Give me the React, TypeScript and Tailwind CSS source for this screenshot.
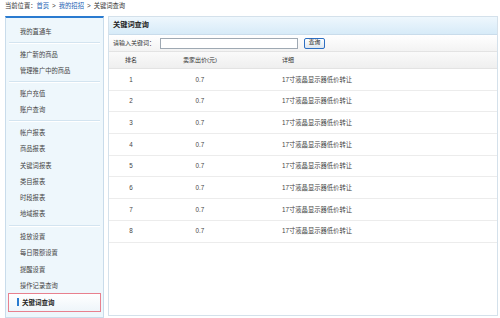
import React from "react";

type Row = {
  rank: number;
  price: string;
  detail: string;
};

const groups: string[][] = [
  ["我的直通车"],
  ["推广新的商品", "管理推广中的商品"],
  ["账户充值", "账户查询"],
  ["帐户报表", "商品报表", "关键词报表", "类目报表", "时段报表", "地域报表"],
  ["投放设置", "每日限额设置", "提醒设置", "操作记录查询"],
];

const rows: Row[] = Array.from({ length: 8 }, (_, i) => ({
  rank: i + 1,
  price: "0.7",
  detail: "17寸液晶显示器低价转让",
}));

const Sidebar: React.FC = () => {
  return (
    <div className="w-[99px] h-[302px] shrink-0 bg-[#eef7fc] border-t-2 border-t-[#2a7bd0] border-x border-b border-x-[#c9dceb] border-b-[#c9dceb] flex flex-col">
      {groups.map((items, gi) => (
        <div key={gi}>
          <div className={gi === 0 ? "pt-[6px] pb-[2px]" : "pt-[2px] pb-[2.5px]"}>
            {items.map((label) => (
              <div key={label} className="h-[16.3px] pl-[14px] flex items-center text-[6.3px] text-[#444]">
                {label}
              </div>
            ))}
            {gi === groups.length - 1 && (
              <div className="mx-[2px] -mt-[1px] h-[19px] border border-[#e8808e] bg-gradient-to-b from-white to-[#eef5fa] flex items-center">
                <span className="ml-[8px] w-[2px] h-[8px] bg-[#2a7bd0]" />
                <span className="ml-[3px] text-[6.5px] font-bold text-[#222]">关键词查询</span>
              </div>
            )}
          </div>
          {gi < groups.length - 1 && (
            <div className="mx-[3px] border-t border-[#d3e4f0] border-b border-b-white" />
          )}
        </div>
      ))}
    </div>
  );
};

const Panel: React.FC = () => {
  return (
    <div className="w-[390px] h-[300px] border border-[#d4e1eb] flex flex-col bg-white">
      <div className="h-[18px] px-[4px] flex items-center bg-gradient-to-b from-[#eef7fd] to-[#d7ebf8] border-b border-[#c9dceb]">
        <span className="text-[7.2px] font-bold text-[#222]">关键词查询</span>
      </div>
      <div className="h-[17px] px-[4px] flex items-center bg-gradient-to-b from-white to-[#f3f3f3] border-b border-[#e3e3e3]">
        <span className="text-[6px] text-[#333] w-[47px]">请输入关键词：</span>
        <div className="w-[138px] h-[11px] border border-[#9fa9b3] bg-white" />
        <button className="ml-[6px] w-[21px] h-[11px] border border-[#2d6fc2] rounded-[2px] bg-gradient-to-b from-white to-[#dde6ef] text-[5.8px] leading-none text-[#222] flex items-center justify-center">
          查询
        </button>
      </div>
      <div className="h-[17px] flex items-center bg-gradient-to-b from-[#fafafa] to-[#efefef] border-b border-[#e3e3e3] text-[6px] text-[#333]">
        <div className="w-[44px] text-center">排名</div>
        <div className="w-[94px] text-center">卖家出价(元)</div>
        <div className="pl-[35px]">详细</div>
      </div>
      {rows.map((r) => (
        <div key={r.rank} className="h-[21.7px] flex items-center border-b border-[#ececec] text-[6.3px] text-[#444]">
          <div className="w-[44px] text-center">{r.rank}</div>
          <div className="w-[94px] text-center">{r.price}</div>
          <div className="pl-[35px]">{r.detail}</div>
        </div>
      ))}
    </div>
  );
};

export default function App() {
  return (
    <div
      className="w-[500px] h-[318px] bg-white overflow-hidden"
      style={{ fontFamily: '"Liberation Sans", "Noto Sans CJK SC", sans-serif' }}
    >
      <div className="h-[16px] px-[5px] pt-[2px] text-[6.3px] leading-[8px] text-[#333]">
        当前位置：<span className="text-[#1a5fb4]">首页</span>
        <span className="mx-[3px]">&gt;</span>
        <span className="text-[#1a5fb4]">我的招招</span>
        <span className="mx-[3px]">&gt;</span>关键词查询
      </div>
      <div className="flex pl-[5px] gap-[4px]">
        <Sidebar />
        <Panel />
      </div>
    </div>
  );
}
